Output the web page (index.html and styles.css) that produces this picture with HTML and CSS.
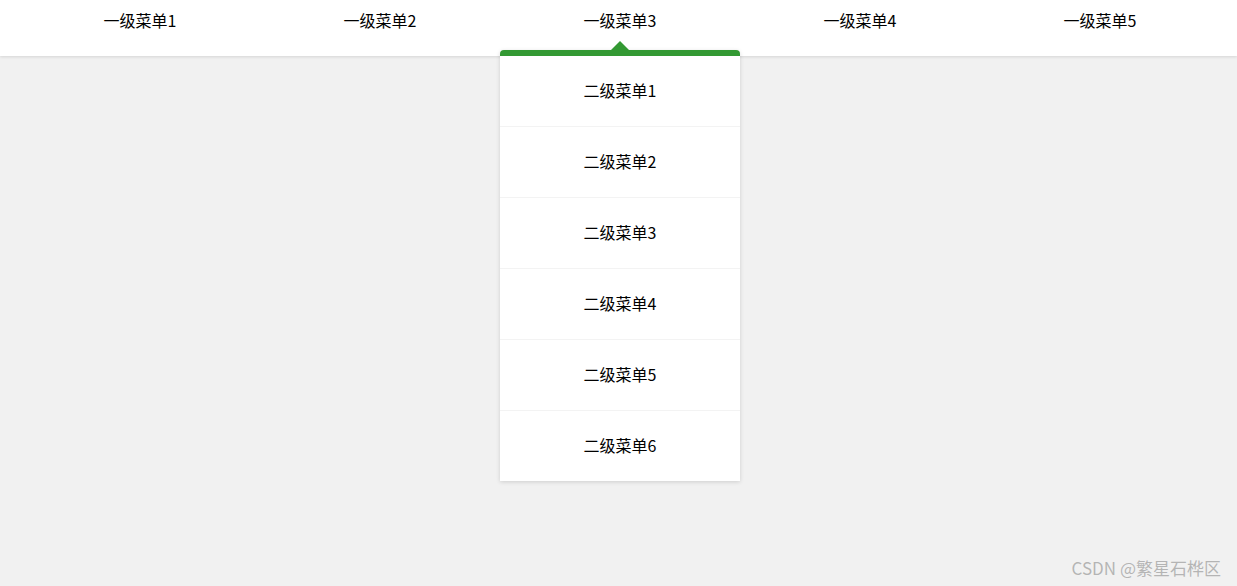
FILE: index.html
```html
<!DOCTYPE html>
<html lang="zh-CN">
<head>
  <meta charset="UTF-8">
  <meta name="viewport" content="width=device-width, initial-scale=1.0">
  <title>二级菜单</title>
  <link rel="stylesheet" href="styles.css">
</head>
<body>
  <div class="nav">
    <ul class="menu">
      <li class="menu-item">一级菜单1</li>
      <li class="menu-item">一级菜单2</li>
      <li class="menu-item active">一级菜单3
        <ul class="submenu">
          <li>二级菜单1</li>
          <li>二级菜单2</li>
          <li>二级菜单3</li>
          <li>二级菜单4</li>
          <li>二级菜单5</li>
          <li>二级菜单6</li>
        </ul>
      </li>
      <li class="menu-item">一级菜单4</li>
      <li class="menu-item">一级菜单5</li>
    </ul>
  </div>

  <div class="watermark">CSDN @繁星石桦区</div>
</body>
</html>
```

FILE: styles.css
```css
* {
  margin: 0;
  padding: 0;
  box-sizing: border-box;
}
html, body {
  height: 100%;
}
body {
  font-family: "Noto Sans CJK SC", "Noto Sans", sans-serif;
  font-size: 16px;
  color: #000;
  background-color: #f1f1f1;
  overflow: hidden;
}
ul {
  list-style: none;
}
.nav {
  height: 56px;
  background-color: white;
  box-shadow: 0 1px 3px rgba(0, 0, 0, 0.12);
  position: relative;
  z-index: 1;
}
.menu {
  display: flex;
  padding-left: 20px;
}
.menu-item {
  position: relative;
  width: 240px;
  height: 42px;
  line-height: 41px;
  text-align: center;
  cursor: pointer;
}
.submenu {
  position: absolute;
  top: 50px;
  left: 0;
  width: 240px;
  background-color: white;
  border-top: 6px solid #339933;
  border-radius: 4px 4px 0 0;
  box-shadow: 0 1px 4px rgba(0, 0, 0, 0.15);
}
.submenu::before {
  content: "";
  position: absolute;
  top: -15px;
  left: 111px;
  border: 9px solid transparent;
  border-bottom-color: #339933;
  border-top: 0;
}
.submenu li {
  height: 71px;
  line-height: 69px;
  border-bottom: 1px solid #f3f3f3;
}
.submenu li:last-child {
  height: 70px;
  border-bottom: none;
}
.watermark {
  position: absolute;
  right: 16px;
  bottom: 6px;
  font-size: 17px;
  color: rgba(120, 120, 120, 0.5);
}
```
